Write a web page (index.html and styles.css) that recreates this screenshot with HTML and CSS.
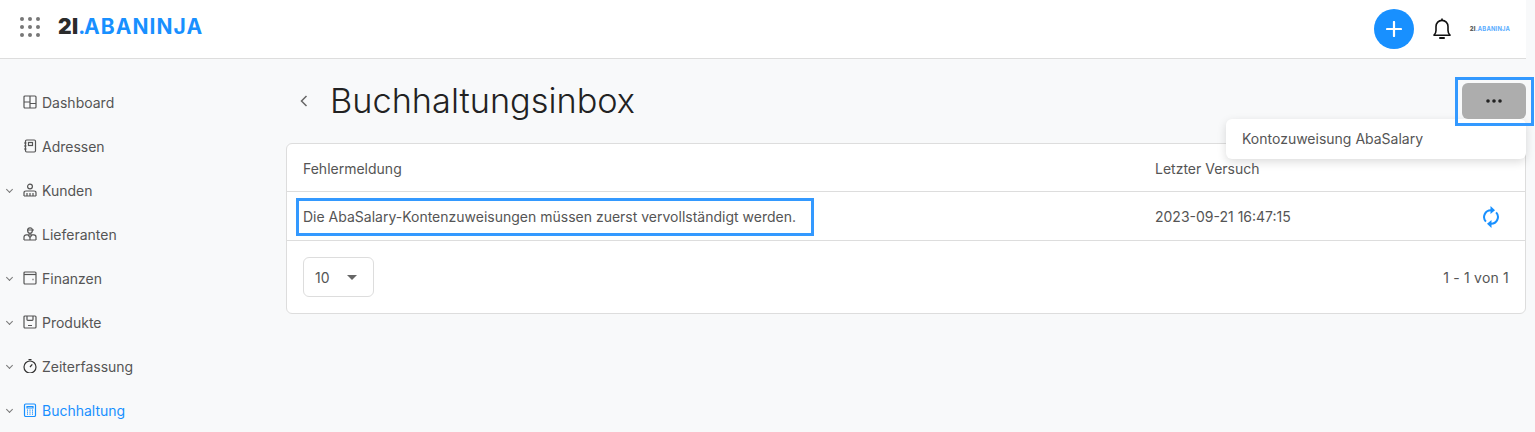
FILE: index.html
```html
<!DOCTYPE html>
<html lang="de">
	<head>
		<meta name="viewport" content="width=device-width, initial-scale=1.0" />
		<title>Buchhaltungsinbox</title>
		<link rel="stylesheet" href="styles.css">
	</head>
	<body>
		<header class="topbar">
			<svg class="apps" width="22" height="20" viewBox="0 0 22 20" fill="#777">
				<circle cx="3" cy="2" r="2"/><circle cx="11" cy="2" r="2"/><circle cx="19" cy="2" r="2"/>
				<circle cx="3" cy="10" r="2"/><circle cx="11" cy="10" r="2"/><circle cx="19" cy="10" r="2"/>
				<circle cx="3" cy="18" r="2"/><circle cx="11" cy="18" r="2"/><circle cx="19" cy="18" r="2"/>
			</svg>
			<div class="logo"><b>2I</b><span class="dot">.</span><span>ABANINJA</span></div>
			<div class="topbar-right">
				<button type="button" class="add">
					<svg width="16" height="16" viewBox="0 0 16 16" stroke="#fff" stroke-width="2.2" stroke-linecap="round"><path d="M8 1v14M1 8h14"/></svg>
				</button>
				<svg class="bell" width="20" height="22" viewBox="0 0 20 22" fill="none" stroke="#111" stroke-width="1.6" stroke-linejoin="round">
					<path d="M2 17.2c1.3-1.2 2-2.6 2-4.7V8.6C4 5 6.6 2.4 10 2.4s6 2.6 6 6.2v3.9c0 2.1.7 3.500 2 4.700z"/>
					<path d="M10 .6v1.8"/>
					<path d="M8 20h4" stroke-width="2" stroke-linecap="round"/>
				</svg>
				<div class="logo small"><b>2I</b><span>.ABANINJA</span></div>
			</div>
		</header>

		<div class="layout">
			<nav class="sidebar">
				<a class="nav-item">
					<svg class="nav-icon" viewBox="0 0 14 14"><rect x="1" y="1" width="12" height="12" rx="1"/><path d="M7 1v12M1 7h6M7 8.500h6"/></svg>
					Dashboard
				</a>
				<a class="nav-item">
					<svg class="nav-icon" viewBox="0 0 14 14"><rect x="2.500" y="1" width="10" height="12" rx="1.200"/><rect x="5.500" y="3.500" width="4" height="3"/><path d="M1 4h2.500M1 7h2.500M1 10h2.500"/></svg>
					Adressen
				</a>
				<a class="nav-item has-sub">
					<svg class="nav-icon" viewBox="0 0 14 14"><circle cx="7" cy="3.500" r="2.400"/><path d="M1 13V9.800C1 8.600 2 8 3 8h8c1 0 2 .6 2 1.800V13M1 13h12M4 10v3M7 10v3M10 10v3"/></svg>
					Kunden
				</a>
				<a class="nav-item">
					<svg class="nav-icon" viewBox="0 0 14 14"><path d="M4 3h7M4.600 3c0 2 1 3.400 2.400 3.400S9.400 5 9.400 3c0-1.300-1-2.200-2.400-2.200S4.600 1.700 4.600 3z"/><path d="M1 13V10c0-1.300 1-2.200 2.200-2.200h7.600C12 7.800 13 8.700 13 10v3M1 13h12M5 8l2 2.500L9 8M7 10.500V13"/></svg>
					Lieferanten
				</a>
				<a class="nav-item has-sub">
					<svg class="nav-icon" viewBox="0 0 14 14"><rect x="1" y="1" width="12" height="12" rx="1"/><path d="M1 3.500h12"/><path d="M9.500 8.500h1" stroke-width="1.400"/></svg>
					Finanzen
				</a>
				<a class="nav-item has-sub">
					<svg class="nav-icon" viewBox="0 0 14 14"><rect x="1" y="1" width="12" height="12" rx="1"/><path d="M4 1v3.500c0 .5.300.8.800.8h4.400c.5 0 .8-.3.800-.8V1M5 10.500h4"/></svg>
					Produkte
				</a>
				<a class="nav-item has-sub">
					<svg class="nav-icon dark" viewBox="0 0 14 14"><circle cx="7" cy="8" r="6"/><path d="M5.500.7h3M7 8l2.300-2.600"/></svg>
					Zeiterfassung
				</a>
				<a class="nav-item has-sub active">
					<svg class="nav-icon" viewBox="0 0 14 14"><rect x="1.500" y="1" width="11" height="12.500" rx="1.200"/><path d="M4 3.500h6v1.500H4zM4 7.200h1M6.500 7.200h1M9 7.200h1M4 9.200h1M6.500 9.200h1M9 9.200h1M4 11.200h1M6.500 11.200h1M9 11.200h1"/></svg>
					Buchhaltung
				</a>
			</nav>

			<main class="content">
				<div class="title-row">
					<svg class="back" width="8" height="12" viewBox="0 0 8 12" fill="none" stroke="#666" stroke-width="1.500"><path d="M6.500 1L1.500 6l5 5"/></svg>
					<h1>Buchhaltungsinbox</h1>
					<div class="actions">
						<button type="button" class="more">
							<svg width="16" height="4" viewBox="0 0 16 4" fill="#222"><circle cx="2" cy="2" r="1.800"/><circle cx="8" cy="2" r="1.800"/><circle cx="14" cy="2" r="1.800"/></svg>
						</button>
						<div class="menu">Kontozuweisung AbaSalary</div>
					</div>
				</div>

				<section class="card">
					<div class="row head">
						<div>Fehlermeldung</div>
						<div>Letzter Versuch</div>
						<div></div>
					</div>
					<div class="row">
						<div><span class="mark">Die AbaSalary-Kontenzuweisungen müssen zuerst vervollständigt werden.</span></div>
						<div>2023-09-21 16:47:15</div>
						<div class="retry">
							<svg width="16" height="22" viewBox="0 0 16 22" fill="none" stroke="#1890ff" stroke-width="2">
								<path d="M2.900 15.600A6.800 6.800 0 0 1 8 4.200"/>
								<path d="M13.100 6.400A6.800 6.800 0 0 1 8 17.800"/>
								<path d="M7.500 0l4.500 4.200-4.500 3.900z" fill="#1890ff" stroke="none"/>
								<path d="M8.500 22L4 17.800l4.500-3.900z" fill="#1890ff" stroke="none"/>
							</svg>
						</div>
					</div>
					<div class="foot">
						<div class="select">10<i class="caret"></i></div>
						<div class="pager">1 - 1 von 1</div>
					</div>
				</section>
			</main>
		</div>
	</body>
</html>
```

FILE: styles.css
```css
html,
body {
	height: 100%;
}

body {
	margin: 0;
	overflow: hidden;
	color: #555;
	background-color: #f8f9fa;
	font-family: Inter, "Liberation Sans", sans-serif;
	font-size: 14px;
}

.topbar {
	display: flex;
	align-items: center;
	box-sizing: border-box;
	height: 59px;
	margin-right: 9px;
	padding: 0 0 5px 19px;
	background-color: #fff;
	border-bottom: 1px solid #ddd;
}

.logo {
	margin-left: 17px;
	color: #1890ff;
	font-family: Inter, sans-serif;
	font-size: 21px;
	font-weight: 700;
	letter-spacing: 1.050px;
	line-height: 1;
}

.logo b {
	color: #2b2b2b;
	letter-spacing: 0.3px;
}

.logo .dot {
	letter-spacing: -1.300px;
}

.logo.small {
	margin-left: 18px;
	font-size: 5.800px;
	letter-spacing: 0.2px;
	opacity: 0.75;
}

.topbar-right {
	display: flex;
	align-items: center;
	margin-left: auto;
	padding: 5px 16px 0 0;
}

.add {
	display: flex;
	align-items: center;
	justify-content: center;
	width: 40px;
	height: 40px;
	padding: 0;
	background-color: #1890ff;
	border: none;
	border-radius: 50%;
}

.bell {
	margin-left: 18px;
}

.layout {
	display: flex;
}

.sidebar {
	flex: none;
	width: 286px;
	padding-top: 21px;
}

.nav-item {
	position: relative;
	display: flex;
	align-items: center;
	gap: 5px;
	height: 44px;
	padding-left: 23px;
}

.nav-item.has-sub::before {
	content: "";
	position: absolute;
	left: 7px;
	top: 19px;
	width: 4px;
	height: 4px;
	border-right: 1px solid #777;
	border-bottom: 1px solid #777;
	transform: rotate(45deg);
}

.nav-item.active {
	color: #1890ff;
}

.nav-icon {
	width: 14px;
	height: 14px;
	fill: none;
	stroke: #555;
	stroke-width: 1.200;
}

.nav-icon.dark {
	stroke: #333;
}

.nav-item.active .nav-icon {
	stroke: #1890ff;
}

.content {
	flex: none;
	width: 1240px;
}

.title-row {
	display: flex;
	align-items: center;
	height: 84px;
}

.back {
	margin-left: 14px;
}

h1 {
	margin: 0 0 0 22px;
	color: #222;
	font-size: 34.300px;
	font-weight: 300;
	line-height: 1;
}

.actions {
	position: relative;
	margin-left: auto;
}

.more {
	position: relative;
	z-index: 1;
	display: flex;
	align-items: center;
	justify-content: center;
	width: 64px;
	height: 36px;
	padding: 0;
	background-color: #adadad;
	border: none;
	border-radius: 6px;
}

.more::after {
	content: "";
	position: absolute;
	top: -6px;
	right: -8px;
	bottom: -7px;
	left: -7px;
	border: 3px solid #3399ff;
}

.menu {
	position: absolute;
	top: 36px;
	right: 0;
	width: 284px;
	padding: 0 0 0 16px;
	background-color: #fff;
	border-radius: 6px;
	box-shadow: 0 3px 10px rgba(0, 0, 0, 0.14);
	line-height: 40px;
}

.card {
	background-color: #fff;
	border: 1px solid #ddd;
	border-radius: 6px;
}

.row {
	display: grid;
	grid-template-columns: 852px 1fr 54px;
	align-items: center;
	box-sizing: border-box;
	height: 49px;
	padding: 1px 0 0 16px;
	border-bottom: 1px solid #ddd;
}

.row.head {
	height: 48px;
}

.mark {
	display: inline-block;
	margin-left: -7px;
	padding: 0 15px 0 4px;
	border: 3px solid #3399ff;
	line-height: 32px;
}

.retry {
	display: flex;
	padding-left: 12px;
}

.foot {
	display: flex;
	align-items: center;
	justify-content: space-between;
	height: 72px;
	padding: 0 16px;
}

.select {
	display: flex;
	align-items: center;
	box-sizing: border-box;
	width: 71px;
	height: 40px;
	padding-left: 11px;
	border: 1px solid #ddd;
	border-radius: 6px;
}

.caret {
	margin-left: 17px;
	border-top: 5px solid #666;
	border-right: 5px solid transparent;
	border-left: 5px solid transparent;
}

.pager {
	letter-spacing: 0.2px;
}
```
